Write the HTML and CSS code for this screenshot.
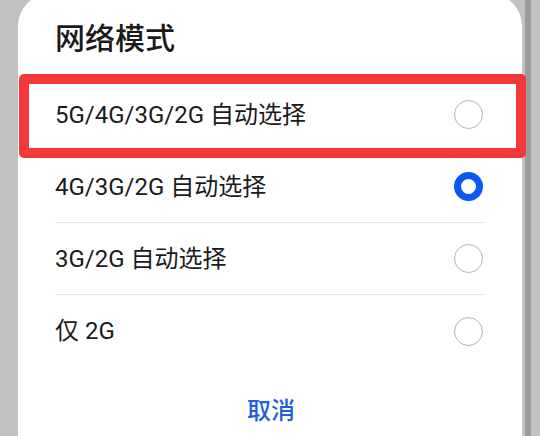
FILE: index.html
```html
<!DOCTYPE html>
<html lang="zh-CN">
<head>
<meta charset="utf-8">
<title>网络模式</title>
<link rel="stylesheet" href="styles.css">
</head>
<body>
<div class="screen">
  <div class="card">
    <div class="header">网络模式</div>
    <div class="list">
      <div class="row">
        <span class="label">5G/4G/3G/2G 自动选择</span>
        <span class="radio"></span>
      </div>
      <div class="row">
        <span class="label">4G/3G/2G 自动选择</span>
        <span class="radio checked"></span>
      </div>
      <div class="row">
        <span class="label">3G/2G 自动选择</span>
        <span class="radio"></span>
      </div>
      <div class="row last">
        <span class="label">仅 2G</span>
        <span class="radio"></span>
      </div>
    </div>
    <div class="footer">
      <span class="cancel">取消</span>
    </div>
  </div>
  <div class="band"></div>
  <div class="highlight"></div>
</div>
</body>
</html>
```

FILE: styles.css
```css
html, body {
  margin: 0;
  padding: 0;
}

body {
  font-family: Roboto, "Noto Sans CJK SC", sans-serif;
  color: #1b1b1b;
}

.screen {
  position: relative;
  display: flex;
  width: 540px;
  height: 436px;
  overflow: hidden;
  background: #c2c2c2;
}

.card {
  margin-left: 18px;
  margin-top: -6px;
  width: 504px;
  flex: none;
  background: #ffffff;
  border-radius: 32px 32px 0 0;
  padding: 0 37px;
  box-sizing: border-box;
}

.header {
  padding-top: 25px;
  padding-bottom: 20px;
  height: 40px;
  line-height: 40px;
  font-size: 30px;
  font-weight: 500;
  color: #1a1a1a;
}

.list {
  display: flex;
  flex-direction: column;
}

.row {
  display: flex;
  align-items: center;
  justify-content: space-between;
  height: 72px;
  box-sizing: border-box;
  border-bottom: 1px solid #e3e3e3;
}

.row.last {
  border-bottom: none;
}

.label {
  font-size: 24px;
  line-height: 30px;
  color: #1b1b1b;
}

.radio {
  width: 29px;
  height: 29px;
  margin-right: 2px;
  border-radius: 50%;
  border: 1.5px solid #b3b3b3;
  box-sizing: border-box;
  flex: none;
}

.radio.checked {
  border: 7.5px solid #0a59f7;
}

.footer {
  padding-top: 29px;
  display: flex;
  justify-content: center;
}

.cancel {
  font-size: 24px;
  line-height: 30px;
  font-weight: 500;
  color: #1f5ed8;
  margin-left: 2px;
}

.band {
  margin-left: 3px;
  width: 6px;
  flex: none;
  background: #9b9b9b;
}

.highlight {
  position: absolute;
  left: 19px;
  top: 74px;
  width: 507px;
  height: 84px;
  box-sizing: border-box;
  border: 10px solid #f43838;
  border-radius: 5px;
}
```
